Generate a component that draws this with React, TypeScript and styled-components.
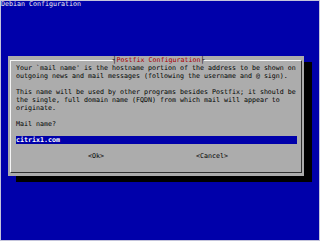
import React from "react";
import styled, { createGlobalStyle } from "styled-components";

const Global = createGlobalStyle`
  html, body { margin: 0; padding: 0; background: #0000aa; }
  body { width: 320px; height: 241px; overflow: hidden; }
`;

const mono = `"DejaVu Sans Mono", "Liberation Mono", monospace`;

const Screen = styled.div`
  width: 320px;
  height: 241px;
  box-sizing: border-box;
  background: #0000aa;
  box-shadow: inset 0 0 0 1px #c4c4dc;
  display: flex;
  flex-direction: column;
  font-family: ${mono};
  font-size: 6.65px;
  line-height: 8px;
  white-space: pre;
`;

const Header = styled.div`
  height: 8px;
  padding-left: 1px;
  color: #f0f0f0;
`;

const Dialog = styled.div`
  margin: 48px 0 0 8px;
  width: 296px;
  height: 120px;
  box-sizing: border-box;
  padding: 0 2px 3px;
  background: #acacac;
  box-shadow: 8px 6px 0 #000000;
  display: flex;
  flex-direction: column;
`;

const Frame = styled.fieldset`
  flex: 1;
  margin: 0;
  padding: 0 0 0 5px;
  min-inline-size: 0;
  border: 1px solid;
  border-color: #f4f4f4 #303030 #303030 #f4f4f4;
  display: flex;
  flex-direction: column;
`;

const Legend = styled.legend`
  margin: 0 auto;
  padding: 0;
  height: 8px;
  line-height: 8px;
  color: #000000;
`;

const LegendTitle = styled.span`
  color: #aa0000;
`;

const Paragraph = styled.div<{ $gapBefore?: number }>`
  margin-top: ${(p) => p.$gapBefore ?? 0}px;
  color: #000000;
`;

const Input = styled.div`
  margin-top: 8px;
  width: 281px;
  height: 8px;
  background: #0000aa;
  color: #ffffff;
  font-weight: bold;
`;

const ButtonRow = styled.div`
  margin-top: 8px;
  height: 8px;
  display: flex;
  gap: 92px;
  padding-left: 72px;
  color: #000000;
`;

const Button = styled.span``;

export default function App() {
  return (
    <>
      <Global />
      <Screen>
        <Header>Debian Configuration</Header>
        <Dialog>
          <Frame>
            <Legend>
              ┤<LegendTitle>Postfix Configuration</LegendTitle>├
            </Legend>
            <Paragraph>
              {"Your `mail name' is the hostname portion of the address to be shown on\noutgoing news and mail messages (following the username and @ sign)."}
            </Paragraph>
            <Paragraph $gapBefore={8}>
              {"This name will be used by other programs besides Postfix; it should be\nthe single, full domain name (FQDN) from which mail will appear to\noriginate."}
            </Paragraph>
            <Paragraph $gapBefore={8}>Mail name?</Paragraph>
            <Input>citrix1.com</Input>
            <ButtonRow>
              <Button>{"<Ok>"}</Button>
              <Button>{"<Cancel>"}</Button>
            </ButtonRow>
          </Frame>
        </Dialog>
      </Screen>
    </>
  );
}
